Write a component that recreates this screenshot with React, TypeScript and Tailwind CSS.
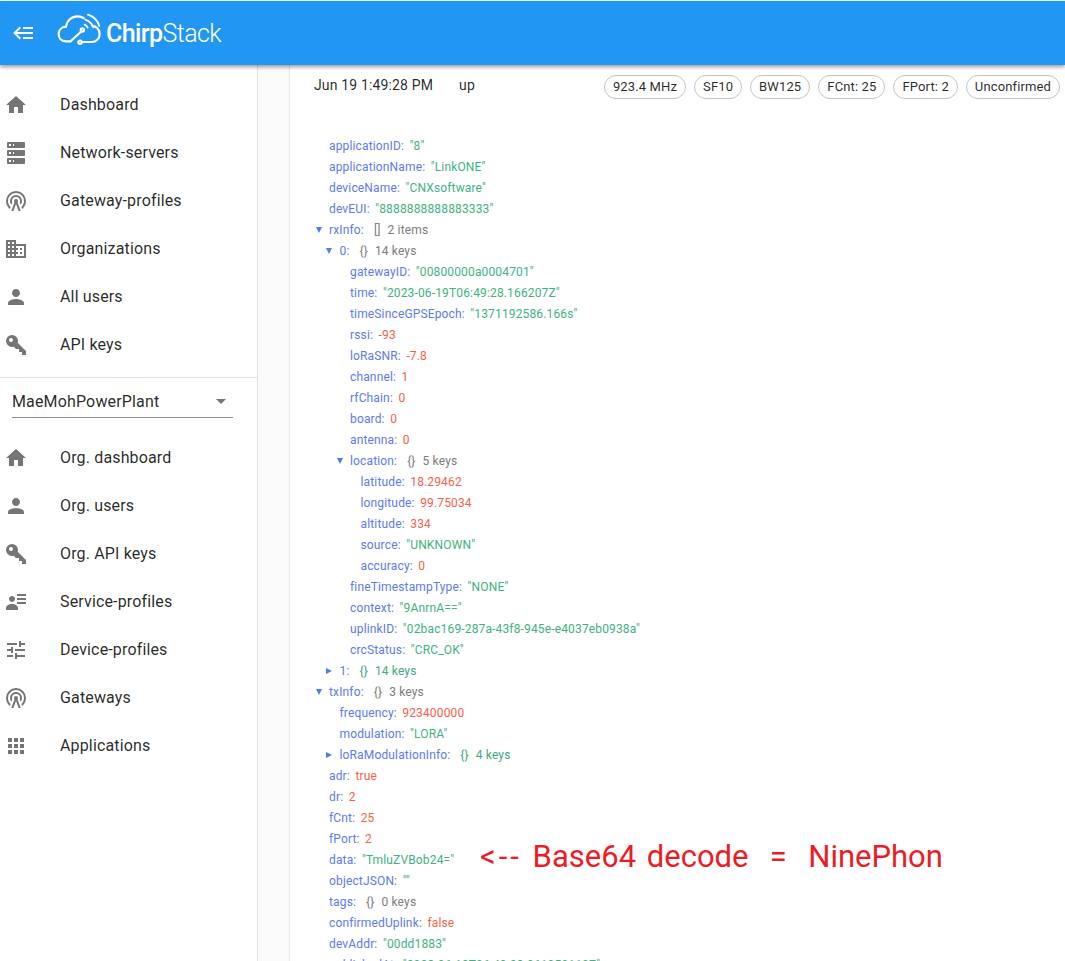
import React from "react";

const paths = {
  home: "M10 20v-6h4v6h5v-8h3L12 3 2 12h3v8z",
  server:
    "M4,1H20A1,1 0 0,1 21,2V6A1,1 0 0,1 20,7H4A1,1 0 0,1 3,6V2A1,1 0 0,1 4,1M4,9H20A1,1 0 0,1 21,10V14A1,1 0 0,1 20,15H4A1,1 0 0,1 3,14V10A1,1 0 0,1 4,9M4,17H20A1,1 0 0,1 21,18V22A1,1 0 0,1 20,23H4A1,1 0 0,1 3,22V18A1,1 0 0,1 4,17M9,5H10V3H9V5M9,13H10V11H9V13M9,21H10V19H9V21M5,3V5H7V3H5M5,11V13H7V11H5M5,19V21H7V19H5Z",
  tower:
    "M12,10A2,2 0 0,1 14,12C14,12.5 13.82,12.94 13.53,13.29L16.7,22H14.57L12,14.93L9.43,22H7.3L10.47,13.29C10.18,12.94 10,12.5 10,12A2,2 0 0,1 12,10M12,8A4,4 0 0,0 8,12C8,12.5 8.1,13 8.28,13.46L7.4,15.86C6.53,14.81 6,13.47 6,12A6,6 0 0,1 12,6A6,6 0 0,1 18,12C18,13.47 17.47,14.81 16.6,15.86L15.72,13.46C15.9,13 16,12.5 16,12A4,4 0 0,0 12,8M12,4A8,8 0 0,0 4,12C4,14.36 5,16.5 6.64,17.94L5.92,19.94C3.54,18.11 2,15.23 2,12A10,10 0 0,1 12,2A10,10 0 0,1 22,12C22,15.23 20.46,18.11 18.08,19.94L17.36,17.94C19,16.5 20,14.36 20,12A8,8 0 0,0 12,4Z",
  domain:
    "M12 7V3H2v18h20V7H12zM6 19H4v-2h2v2zm0-4H4v-2h2v2zm0-4H4V9h2v2zm0-4H4V5h2v2zm4 12H8v-2h2v2zm0-4H8v-2h2v2zm0-4H8V9h2v2zm0-4H8V5h2v2zm10 12h-8v-2h2v-2h-2v-2h2v-2h-2V9h8v10zm-2-8h-2v2h2v-2zm0 4h-2v2h2v-2z",
  person:
    "M12 12c2.21 0 4-1.79 4-4s-1.79-4-4-4-4 1.79-4 4 1.79 4 4 4zm0 2c-2.67 0-8 1.34-8 4v2h16v-2c0-2.66-5.33-4-8-4z",
  key: "M22,18V22H18V19H15V16H12L9.74,13.74C9.19,13.91 8.61,14 8,14A6,6 0 0,1 2,8A6,6 0 0,1 8,2A6,6 0 0,1 14,8C14,8.61 13.91,9.19 13.74,9.74L22,18M7,5A2,2 0 0,0 5,7A2,2 0 0,0 7,9A2,2 0 0,0 9,7A2,2 0 0,0 7,5Z",
  details:
    "M11,9C11,10.66 9.66,12 8,12C6.34,12 5,10.66 5,9C5,7.34 6.34,6 8,6C9.66,6 11,7.34 11,9M14,20H2V18C2,15.79 4.69,14 8,14C11.31,14 14,15.79 14,18M22,12V14H13V12M22,8V10H13V8M22,4V6H13V4Z",
  tune: "M3 17v2h6v-2H3zM3 5v2h10V5H3zm10 16v-2h8v-2h-8v-2h-2v6h2zM7 9v2H3v2h4v2h2V9H7zm14 4v-2H11v2h10zm-6-4h2V7h4V5h-4V3h-2v6z",
  apps: "M4 8h4V4H4v4zm6 12h4v-4h-4v4zm-6 0h4v-4H4v4zm0-6h4v-4H4v4zm6 0h4v-4h-4v4zm6-10v4h4V4h-4zm-6 4h4V4h-4v4zm6 6h4v-4h-4v4zm0 6h4v-4h-4v4z",
};

const Icon = ({ d, className }: { d: string; className?: string }) => (
  <svg viewBox="0 0 24 24" className={className} fill="currentColor">
    <path d={d} />
  </svg>
);

const MenuItem = ({ icon, label }: { icon: string; label: string }) => (
  <div className="flex h-12 items-center pl-1">
    <Icon d={icon} className="h-6 w-6 shrink-0 text-[#757575]" />
    <span className="ml-8 text-base tracking-[0.15px] text-black/85">{label}</span>
  </div>
);

// cloud with a small circuit and signal arcs, 3 units per pixel
const Logo = () => (
  <svg viewBox="0 0 162 150" className="h-[50px] w-[54px]" fill="none" stroke="white" strokeWidth="6.5" strokeLinecap="round">
    <path d="M62 100H48C34 100 26 90 26 78C26 66 35 57 48 56C50 38 65 25 83 25C90 25 96 27 101 30" />
    <path d="M126 53C140 55 149 66 149 78C149 92 138 102 125 102H96" />
    <path d="M62 100L93 71" />
    <circle cx="97" cy="66" r="5" />
    <circle cx="90" cy="103" r="5" />
    <path d="M104 50C108 52 111 55 113 59" strokeWidth="5.5" />
    <path d="M106 35C117 39 126 47 130 58" strokeWidth="5.5" />
    <path d="M114 20C130 25 143 38 148 54" strokeWidth="5.5" />
  </svg>
);

type Val = "str" | "num" | "none";
type Row = {
  d: 0 | 1 | 2 | 3;
  k: string;
  v?: string;
  t?: Val;
  arrow?: "open" | "closed";
  br?: string;
  count?: string;
};

const rows: Row[] = [
  { d: 0, k: "applicationID", v: '"8"', t: "str" },
  { d: 0, k: "applicationName", v: '"LinkONE"', t: "str" },
  { d: 0, k: "deviceName", v: '"CNXsoftware"', t: "str" },
  { d: 0, k: "devEUI", v: '"8888888888883333"', t: "str" },
  { d: 0, k: "rxInfo", arrow: "open", br: "[]", count: "2 items" },
  { d: 1, k: "0", arrow: "open", br: "{}", count: "14 keys" },
  { d: 2, k: "gatewayID", v: '"00800000a0004701"', t: "str" },
  { d: 2, k: "time", v: '"2023-06-19T06:49:28.166207Z"', t: "str" },
  { d: 2, k: "timeSinceGPSEpoch", v: '"1371192586.166s"', t: "str" },
  { d: 2, k: "rssi", v: "-93", t: "num" },
  { d: 2, k: "loRaSNR", v: "-7.8", t: "num" },
  { d: 2, k: "channel", v: "1", t: "num" },
  { d: 2, k: "rfChain", v: "0", t: "num" },
  { d: 2, k: "board", v: "0", t: "num" },
  { d: 2, k: "antenna", v: "0", t: "num" },
  { d: 2, k: "location", arrow: "open", br: "{}", count: "5 keys" },
  { d: 3, k: "latitude", v: "18.29462", t: "num" },
  { d: 3, k: "longitude", v: "99.75034", t: "num" },
  { d: 3, k: "altitude", v: "334", t: "num" },
  { d: 3, k: "source", v: '"UNKNOWN"', t: "str" },
  { d: 3, k: "accuracy", v: "0", t: "num" },
  { d: 2, k: "fineTimestampType", v: '"NONE"', t: "str" },
  { d: 2, k: "context", v: '"9AnrnA=="', t: "str" },
  { d: 2, k: "uplinkID", v: '"02bac169-287a-43f8-945e-e4037eb0938a"', t: "str" },
  { d: 2, k: "crcStatus", v: '"CRC_OK"', t: "str" },
  { d: 1, k: "1", arrow: "closed", br: "{}", count: "14 keys" },
  { d: 0, k: "txInfo", arrow: "open", br: "{}", count: "3 keys" },
  { d: 1, k: "frequency", v: "923400000", t: "num" },
  { d: 1, k: "modulation", v: '"LORA"', t: "str" },
  { d: 1, k: "loRaModulationInfo", arrow: "closed", br: "{}", count: "4 keys" },
  { d: 0, k: "adr", v: "true", t: "num" },
  { d: 0, k: "dr", v: "2", t: "num" },
  { d: 0, k: "fCnt", v: "25", t: "num" },
  { d: 0, k: "fPort", v: "2", t: "num" },
  { d: 0, k: "data", v: '"TmluZVBob24="', t: "str" },
  { d: 0, k: "objectJSON", v: '""', t: "str" },
  { d: 0, k: "tags", br: "{}", count: "0 keys" },
  { d: 0, k: "confirmedUplink", v: "false", t: "num" },
  { d: 0, k: "devAddr", v: '"00dd1883"', t: "str" },
  { d: 0, k: "publishedAt", v: '"2023-06-19T06:49:28.961950110Z"', t: "str" },
];

const indent = ["pl-0", "pl-[10.5px]", "pl-[21px]", "pl-[31.5px]"];
const valueColor = { str: "text-[#3fb27f]", num: "text-[#f9604a]", none: "" };

const JsonRow = ({ row }: { row: Row }) => (
  <div className={`flex h-[21px] items-center whitespace-nowrap tracking-[0.15px] ${indent[row.d]}`}>
    <span className="flex w-[13.5px] shrink-0 items-center">
      {row.arrow === "open" && (
        <span className="h-0 w-0 border-x-[3px] border-t-[6px] border-x-transparent border-t-[#4d7cf0]" />
      )}
      {row.arrow === "closed" && (
        <span className="h-0 w-0 border-y-[3px] border-l-[6px] border-y-transparent border-l-[#4d7cf0]" />
      )}
    </span>
    <span className="text-[#6079f2]">{row.k}:</span>
    {row.v && <span className={`ml-[5.5px] ${valueColor[row.t ?? "none"]}`}>{row.v}</span>}
    {row.br && (
      <span className={`ml-[10px] flex gap-[7px] ${row.arrow === "closed" ? "text-[#3fa97a]" : "text-[#7c7c7c]"}`}>
        <span>{row.br}</span>
        <span>{row.count}</span>
      </span>
    )}
  </div>
);

const chips = ["923.4 MHz", "SF10", "BW125", "FCnt: 25", "FPort: 2", "Unconfirmed"];

export default function App() {
  return (
    <div className="flex h-[961px] w-[1065px] flex-col overflow-hidden bg-white pt-px font-['Roboto',sans-serif]">
      <header className="relative z-10 flex h-16 shrink-0 items-center bg-[#2196f3] pl-3 shadow-[0_2px_4px_rgba(0,0,0,0.4)]">
        <Icon
          d="M5,13L9,17L7.6,18.42L1.18,12L7.6,5.58L9,7L5,11H21V13H5M21,6V8H11V6H21M21,16V18H11V16H21Z"
          className="h-6 w-6 text-white"
        />
        <div className="ml-[14px]">
          <Logo />
        </div>
        <span className="ml-[2px] text-[25px] leading-none tracking-[-0.6px] text-white">
          <span className="font-medium">Chirp</span>
          <span className="font-light">Stack</span>
        </span>
      </header>
      <div className="relative flex min-h-0 flex-1">
        <aside className="w-[258px] shrink-0 border-r border-[#e0e0e0] bg-white pt-4">
          {["Dashboard", "Network-servers", "Gateway-profiles", "Organizations", "All users", "API keys"].map((label, i) => (
            <MenuItem key={label} label={label} icon={[paths.home, paths.server, paths.tower, paths.domain, paths.person, paths.key][i]} />
          ))}
          <div className="mt-2 border-t border-[#e0e0e0] px-3 pt-[12px] pb-4">
            <div className="flex h-[28px] w-[221px] items-center justify-between border-b border-[#8c8c8c] pb-1 pr-[7px]">
              <span className="text-base tracking-[0.15px] text-black/85">MaeMohPowerPlant</span>
              <span className="h-0 w-0 border-x-[5px] border-t-[5px] border-x-transparent border-t-[#757575]" />
            </div>
          </div>
          {["Org. dashboard", "Org. users", "Org. API keys", "Service-profiles", "Device-profiles", "Gateways", "Applications"].map((label, i) => (
            <MenuItem key={label} label={label} icon={[paths.home, paths.person, paths.key, paths.details, paths.tune, paths.tower, paths.apps][i]} />
          ))}
        </aside>
        <div className="w-8 shrink-0 border-r border-[#e8e8e8] bg-[#fafafa]" />
        <main className="min-w-0 flex-1 bg-white">
          <div className="flex h-[70px] items-start pt-[9px] pl-6 pr-[5px]">
            <div className="flex h-[21px] items-center text-sm tracking-[0.15px] text-black/85">
              <span>Jun 19 1:49:28 PM</span>
              <span className="ml-[26px]">up</span>
            </div>
            <div className="ml-auto flex gap-2 pt-px">
              {chips.map((chip) => (
                <span key={chip} className="flex h-6 items-center rounded-full border border-[#c4c4c4] px-2 text-[13px] tracking-[0.13px] text-black/85">
                  {chip}
                </span>
              ))}
            </div>
          </div>
          <div className="pl-[25.5px] text-xs">
            {rows.map((row) => (
              <JsonRow key={row.k + row.d + row.arrow} row={row} />
            ))}
          </div>
        </main>
        <span className="absolute left-[480px] top-[770px] whitespace-nowrap text-[31px] leading-[44px] text-[#ed1c24] [word-spacing:3px]">
          <span className="tracking-[3px]">{"<--"}</span>
          {"\u00a0Base64 decode\u00a0\u00a0=\u00a0\u00a0NinePhon"}
        </span>
      </div>
    </div>
  );
}
